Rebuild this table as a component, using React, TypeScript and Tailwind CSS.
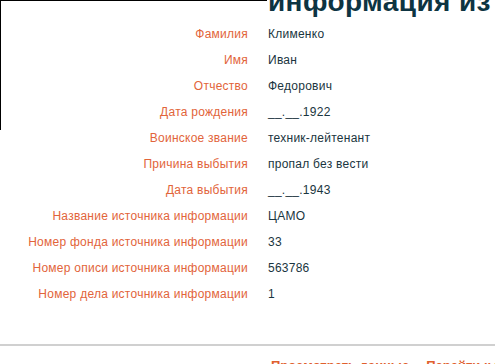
import React from "react";

const rows: [string, string][] = [
  ["Фамилия", "Клименко"],
  ["Имя", "Иван"],
  ["Отчество", "Федорович"],
  ["Дата рождения", "__.__.1922"],
  ["Воинское звание", "техник-лейтенант"],
  ["Причина выбытия", "пропал без вести"],
  ["Дата выбытия", "__.__.1943"],
  ["Название источника информации", "ЦАМО"],
  ["Номер фонда источника информации", "33"],
  ["Номер описи источника информации", "563786"],
  ["Номер дела источника информации", "1"],
];

export default function App() {
  return (
    <div
      className="relative w-[495px] h-[364px] overflow-hidden bg-white"
      style={{ fontFamily: '"Liberation Sans", Arial, sans-serif' }}
    >
      <div className="absolute left-0 top-0 w-[267px] h-[130px] border-l border-t border-black" />
      <div className="pl-[268px] mt-[-12px] h-[28px] text-[28px] leading-[28px] tracking-[0.4px] font-bold text-[#0d3442] whitespace-nowrap">
        информация из
      </div>
      <div className="mt-[5px] grid grid-cols-[248px_1fr] gap-x-[20px]">
        {rows.map(([k, v]) => (
          <React.Fragment key={k}>
            <div className="h-[26px] leading-[26px] text-right text-[12px] tracking-[0.25px] text-[#e2643a] whitespace-nowrap">
              {k}
            </div>
            <div className="h-[26px] leading-[26px] text-[12px] tracking-[0.25px] text-[#1a3540] whitespace-nowrap">
              {v}
            </div>
          </React.Fragment>
        ))}
      </div>
      <div className="mt-[37px] h-[2px] bg-[#d0d0d0]" />
      <div className="mt-[12px] flex gap-[17px] pl-[271px] text-[13px] leading-[16px] font-bold text-[#e0602e] whitespace-nowrap">
        <span className="underline">Просмотреть данные</span>
        <span className="underline">Перейти к началу</span>
      </div>
    </div>
  );
}
